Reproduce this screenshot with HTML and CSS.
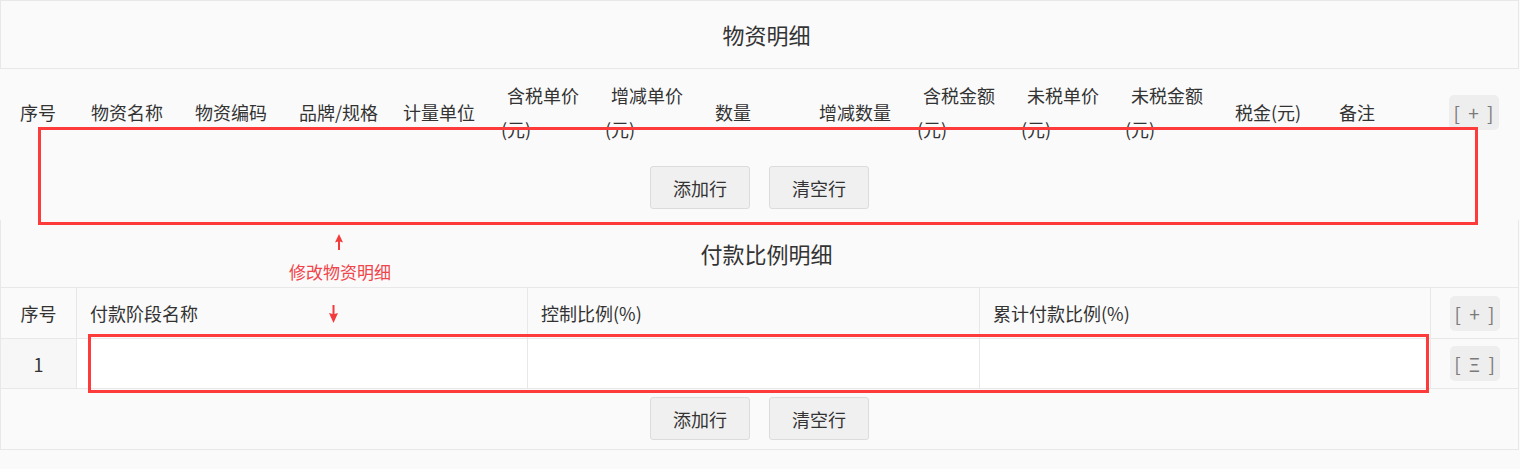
FILE: index.html
```html
<!DOCTYPE html>
<html lang="zh-CN">
<head>
  <meta charset="UTF-8">
  <title>物资明细</title>
  <link rel="stylesheet" href="styles.css">
</head>
<body>
  <div id="page">
    <div class="section">
      <div class="section-title framed">物资明细</div>
      <div class="goods-head">
        <div class="th center">序号</div>
        <div class="th">物资名称</div>
        <div class="th">物资编码</div>
        <div class="th">品牌/规格</div>
        <div class="th">计量单位</div>
        <div class="th">含税单价(元)</div>
        <div class="th">增减单价(元)</div>
        <div class="th">数量</div>
        <div class="th">增减数量</div>
        <div class="th">含税金额(元)</div>
        <div class="th">未税单价(元)</div>
        <div class="th">未税金额(元)</div>
        <div class="th">税金(元)</div>
        <div class="th">备注</div>
        <div class="th tool-cell"><span class="tool">[ + ]</span></div>
      </div>
      <div class="btn-row">
        <button class="btn">添加行</button>
        <button class="btn">清空行</button>
      </div>
    </div>

    <div class="section boxed">
      <div class="section-title">付款比例明细</div>
      <div class="pay-grid">
        <div class="cell th center">序号</div>
        <div class="cell th">付款阶段名称</div>
        <div class="cell th">控制比例(%)</div>
        <div class="cell th">累计付款比例(%)</div>
        <div class="cell th tool-cell"><span class="tool">[ + ]</span></div>
        <div class="cell td idx">1</div>
        <div class="cell td input"></div>
        <div class="cell td input"></div>
        <div class="cell td input"></div>
        <div class="cell td tool-cell"><span class="tool">[ Ξ ]</span></div>
      </div>
      <div class="btn-row">
        <button class="btn">添加行</button>
        <button class="btn">清空行</button>
      </div>
    </div>

    <!-- annotations drawn over the form -->
    <div class="mark mark-goods"></div>
    <div class="mark mark-pay"></div>
    <svg class="arrow arrow-up" width="8" height="16" viewBox="0 0 8 16">
      <path d="M4 0 L8 8.5 L5 7.5 L5 16 L3 16 L3 7.5 L0 8.5 Z"/>
    </svg>
    <div class="note">修改物资明细</div>
    <svg class="arrow arrow-down" width="9" height="18" viewBox="0 0 9 18">
      <path d="M3.5 0 L5.5 0 L5.5 9 L9 8 L4.5 18 L0 8 L3.5 9 Z"/>
    </svg>
  </div>
</body>
</html>
```

FILE: styles.css
```css
body {
    margin: 0;
    background: #fafafa;
    color: #333;
    font-family: 'Noto Sans CJK SC', 'Microsoft YaHei', sans-serif;
    font-size: 18px;
}
#page {
    position: relative;
    width: 1519px;
}
.section-title {
    height: 67px;
    line-height: 67px;
    text-align: center;
    padding-left: 14px;
    font-size: 22px;
}
.section-title.framed {
    border: 1px solid #e8e8e8;
}
.boxed {
    border: 1px solid #e8e8e8;
    border-top: none;
}

/* material table header */
.goods-head {
    display: grid;
    grid-template-columns: 76px repeat(13, 104px) 1fr;
    align-items: center;
    height: 86px;
    padding-bottom: 5px;
}
.goods-head .th {
    padding: 0 4px 0 9px;
    text-indent: 6px;
    line-height: 34px;
}
.th.center, .th.tool-cell {
    padding: 0;
    text-indent: 0;
    text-align: center;
}
.tool {
    display: inline-block;
    width: 50px;
    height: 35px;
    line-height: 35px;
    background: #eeeeee;
    border-radius: 5px;
    color: #7a7a7a;
    text-align: center;
    font-size: 19px;
    word-spacing: 4px;
}

/* payment table */
.pay-grid {
    display: grid;
    grid-template-columns: 76px 451px 452px 451px 1fr;
    border-top: 1px solid #e8e8e8;
}
.cell {
    display: flex;
    align-items: center;
    border-right: 1px solid #e8e8e8;
    border-bottom: 1px solid #e8e8e8;
}
.cell:nth-child(5n) {
    border-right: none;
}
.cell.th {
    height: 50px;
    padding-left: 13px;
}
.cell.td {
    height: 49px;
}
.cell.center, .cell.idx, .cell.tool-cell {
    justify-content: center;
    padding-left: 0;
}
.cell.idx {
    background: #f7f7f7;
}
.cell.input {
    background: #fff;
}

.btn-row {
    display: flex;
    justify-content: center;
    gap: 19px;
    margin-top: 6px;
    padding-bottom: 11px;
}
.boxed .btn-row {
    margin-top: 8px;
    padding-bottom: 9px;
}
.btn {
    width: 100px;
    height: 43px;
    background: #f0f0f0;
    border: 1px solid #dcdcdc;
    border-radius: 3px;
    color: #333;
    font-family: inherit;
    font-size: 18px;
    padding: 0;
}

.mark {
    position: absolute;
    border: 3px solid #fd3b3b;
}
.mark-goods {
    left: 38px;
    top: 127px;
    width: 1434px;
    height: 92px;
}
.mark-pay {
    left: 88px;
    top: 334px;
    width: 1335px;
    height: 53px;
}
.arrow {
    position: absolute;
    fill: #f43b3b;
}
.arrow-up {
    left: 335px;
    top: 234px;
}
.arrow-down {
    left: 329px;
    top: 305px;
}
.note {
    position: absolute;
    left: 289px;
    top: 262px;
    font-size: 17px;
    line-height: 20px;
    color: #f0444a;
}
```
